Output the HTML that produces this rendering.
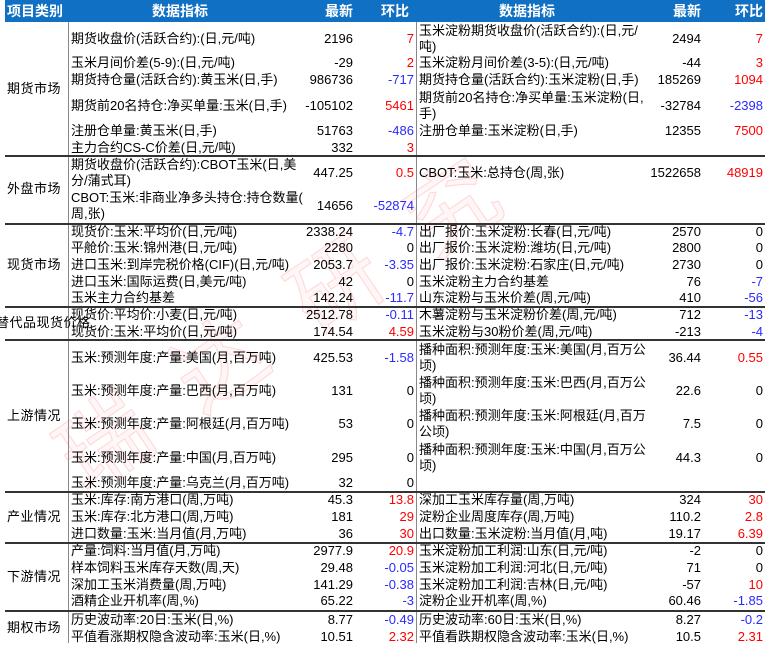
<!DOCTYPE html>
<html><head><meta charset="utf-8"><style>
*{margin:0;padding:0;box-sizing:border-box}
body{width:776px;height:643px;overflow:hidden;background:#fff;position:relative;font-family:"Liberation Sans","Noto Sans CJK SC",sans-serif;font-size:13px;color:#000}
.hd{position:absolute;left:5px;top:0;width:760px;height:22px;background:#1070c4}
.h{position:absolute;top:3px;color:#fff;font-weight:bold;font-size:14px;line-height:16px;white-space:nowrap}
.t{position:absolute;line-height:16px;white-space:nowrap}
.c{position:absolute;width:68px;left:0;text-align:center;line-height:16px;white-space:nowrap;letter-spacing:0.5px}
.r{color:#ff0000}.b{color:#2a2aff}
.vl{position:absolute;width:1px;background:#888;top:22px;height:621px}
.sp{position:absolute;left:5px;width:760px;height:2px;background:#333}
.wm{position:absolute;left:15px;top:255px;width:560px;height:100px;line-height:100px;font-size:90px;letter-spacing:50px;color:rgba(255,0,0,0.03);-webkit-text-stroke:1.2px rgba(255,90,90,0.2);transform:rotate(-34deg);transform-origin:center;white-space:nowrap;font-family:"Noto Sans CJK SC",sans-serif}
</style></head><body>
<div class="wm">瑞达研究</div>
<div class="hd"></div>
<div class="h" style="left:7px">项目类别</div>
<div class="h" style="left:152px">数据指标</div>
<div class="h" style="right:423px">最新</div>
<div class="h" style="left:381px">环比</div>
<div class="h" style="left:499px">数据指标</div>
<div class="h" style="right:75px">最新</div>
<div class="h" style="right:13px">环比</div>
<div class="vl" style="left:68px"></div>
<div class="vl" style="left:416px"></div>
<div class="sp" style="top:155px"></div>
<div class="sp" style="top:223px"></div>
<div class="sp" style="top:306px"></div>
<div class="sp" style="top:339px"></div>
<div class="sp" style="top:491px"></div>
<div class="sp" style="top:542px"></div>
<div class="sp" style="top:610px"></div>

<div class="c" style="top:81px">期货市场</div>
<div class="c" style="top:181px">外盘市场</div>
<div class="c" style="top:257px">现货市场</div>
<div class="c" style="top:315px;left:-4px;width:80px">替代品现货价格</div>
<div class="c" style="top:408px">上游情况</div>
<div class="c" style="top:509px">产业情况</div>
<div class="c" style="top:569px">下游情况</div>
<div class="c" style="top:620px">期权市场</div>

<div class="t" style="left:71px;top:31px">期货收盘价(活跃合约):(日,元/吨)</div><div class="t" style="right:423px;top:31px">2196</div><div class="t r" style="right:362px;top:31px">7</div>
<div class="t" style="left:71px;top:55px">玉米月间价差(5-9):(日,元/吨)</div><div class="t" style="right:423px;top:55px">-29</div><div class="t r" style="right:362px;top:55px">2</div>
<div class="t" style="left:71px;top:72px">期货持仓量(活跃合约):黄玉米(日,手)</div><div class="t" style="right:423px;top:72px">986736</div><div class="t b" style="right:362px;top:72px">-717</div>
<div class="t" style="left:71px;top:98px">期货前20名持仓:净买单量:玉米(日,手)</div><div class="t" style="right:423px;top:98px">-105102</div><div class="t r" style="right:362px;top:98px">5461</div>
<div class="t" style="left:71px;top:123px">注册仓单量:黄玉米(日,手)</div><div class="t" style="right:423px;top:123px">51763</div><div class="t b" style="right:362px;top:123px">-486</div>
<div class="t" style="left:71px;top:140px">主力合约CS-C价差(日,元/吨)</div><div class="t" style="right:423px;top:140px">332</div><div class="t r" style="right:362px;top:140px">3</div>

<div class="t" style="left:71px;top:157px">期货收盘价(活跃合约):CBOT玉米(日,美<br>分/蒲式耳)</div><div class="t" style="right:423px;top:165px">447.25</div><div class="t r" style="right:362px;top:165px">0.5</div>
<div class="t" style="left:71px;top:190px">CBOT:玉米:非商业净多头持仓:持仓数量(<br>周,张)</div><div class="t" style="right:423px;top:198px">14656</div><div class="t b" style="right:362px;top:198px">-52874</div>

<div class="t" style="left:71px;top:224px">现货价:玉米:平均价(日,元/吨)</div><div class="t" style="right:423px;top:224px">2338.24</div><div class="t b" style="right:362px;top:224px">-4.7</div>
<div class="t" style="left:71px;top:240px">平舱价:玉米:锦州港(日,元/吨)</div><div class="t" style="right:423px;top:240px">2280</div><div class="t" style="right:362px;top:240px">0</div>
<div class="t" style="left:71px;top:257px">进口玉米:到岸完税价格(CIF)(日,元/吨)</div><div class="t" style="right:423px;top:257px">2053.7</div><div class="t b" style="right:362px;top:257px">-3.35</div>
<div class="t" style="left:71px;top:274px">进口玉米:国际运费(日,美元/吨)</div><div class="t" style="right:423px;top:274px">42</div><div class="t" style="right:362px;top:274px">0</div>
<div class="t" style="left:71px;top:290px">玉米主力合约基差</div><div class="t" style="right:423px;top:290px">142.24</div><div class="t b" style="right:362px;top:290px">-11.7</div>

<div class="t" style="left:71px;top:307px">现货价:平均价:小麦(日,元/吨)</div><div class="t" style="right:423px;top:307px">2512.78</div><div class="t b" style="right:362px;top:307px">-0.11</div>
<div class="t" style="left:71px;top:324px">现货价:玉米:平均价(日,元/吨)</div><div class="t" style="right:423px;top:324px">174.54</div><div class="t r" style="right:362px;top:324px">4.59</div>

<div class="t" style="left:71px;top:350px">玉米:预测年度:产量:美国(月,百万吨)</div><div class="t" style="right:423px;top:350px">425.53</div><div class="t b" style="right:362px;top:350px">-1.58</div>
<div class="t" style="left:71px;top:383px">玉米:预测年度:产量:巴西(月,百万吨)</div><div class="t" style="right:423px;top:383px">131</div><div class="t" style="right:362px;top:383px">0</div>
<div class="t" style="left:71px;top:416px">玉米:预测年度:产量:阿根廷(月,百万吨)</div><div class="t" style="right:423px;top:416px">53</div><div class="t" style="right:362px;top:416px">0</div>
<div class="t" style="left:71px;top:450px">玉米:预测年度:产量:中国(月,百万吨)</div><div class="t" style="right:423px;top:450px">295</div><div class="t" style="right:362px;top:450px">0</div>
<div class="t" style="left:71px;top:475px">玉米:预测年度:产量:乌克兰(月,百万吨)</div><div class="t" style="right:423px;top:475px">32</div><div class="t" style="right:362px;top:475px">0</div>

<div class="t" style="left:71px;top:492px">玉米:库存:南方港口(周,万吨)</div><div class="t" style="right:423px;top:492px">45.3</div><div class="t r" style="right:362px;top:492px">13.8</div>
<div class="t" style="left:71px;top:509px">玉米:库存:北方港口(周,万吨)</div><div class="t" style="right:423px;top:509px">181</div><div class="t r" style="right:362px;top:509px">29</div>
<div class="t" style="left:71px;top:526px">进口数量:玉米:当月值(月,万吨)</div><div class="t" style="right:423px;top:526px">36</div><div class="t r" style="right:362px;top:526px">30</div>

<div class="t" style="left:71px;top:543px">产量:饲料:当月值(月,万吨)</div><div class="t" style="right:423px;top:543px">2977.9</div><div class="t r" style="right:362px;top:543px">20.9</div>
<div class="t" style="left:71px;top:560px">样本饲料玉米库存天数(周,天)</div><div class="t" style="right:423px;top:560px">29.48</div><div class="t b" style="right:362px;top:560px">-0.05</div>
<div class="t" style="left:71px;top:577px">深加工玉米消费量(周,万吨)</div><div class="t" style="right:423px;top:577px">141.29</div><div class="t b" style="right:362px;top:577px">-0.38</div>
<div class="t" style="left:71px;top:593px">酒精企业开机率(周,%)</div><div class="t" style="right:423px;top:593px">65.22</div><div class="t b" style="right:362px;top:593px">-3</div>

<div class="t" style="left:71px;top:612px">历史波动率:20日:玉米(日,%)</div><div class="t" style="right:423px;top:612px">8.77</div><div class="t b" style="right:362px;top:612px">-0.49</div>
<div class="t" style="left:71px;top:629px">平值看涨期权隐含波动率:玉米(日,%)</div><div class="t" style="right:423px;top:629px">10.51</div><div class="t r" style="right:362px;top:629px">2.32</div>

<div class="t" style="left:419px;top:23px">玉米淀粉期货收盘价(活跃合约):(日,元/<br>吨)</div><div class="t" style="right:75px;top:31px">2494</div><div class="t r" style="right:13px;top:31px">7</div>
<div class="t" style="left:419px;top:55px">玉米淀粉月间价差(3-5):(日,元/吨)</div><div class="t" style="right:75px;top:55px">-44</div><div class="t r" style="right:13px;top:55px">3</div>
<div class="t" style="left:419px;top:72px">期货持仓量(活跃合约):玉米淀粉(日,手)</div><div class="t" style="right:75px;top:72px">185269</div><div class="t r" style="right:13px;top:72px">1094</div>
<div class="t" style="left:419px;top:90px">期货前20名持仓:净买单量:玉米淀粉(日,<br>手)</div><div class="t" style="right:75px;top:98px">-32784</div><div class="t b" style="right:13px;top:98px">-2398</div>
<div class="t" style="left:419px;top:123px">注册仓单量:玉米淀粉(日,手)</div><div class="t" style="right:75px;top:123px">12355</div><div class="t r" style="right:13px;top:123px">7500</div>

<div class="t" style="left:419px;top:165px">CBOT:玉米:总持仓(周,张)</div><div class="t" style="right:75px;top:165px">1522658</div><div class="t r" style="right:13px;top:165px">48919</div>

<div class="t" style="left:419px;top:224px">出厂报价:玉米淀粉:长春(日,元/吨)</div><div class="t" style="right:75px;top:224px">2570</div><div class="t" style="right:13px;top:224px">0</div>
<div class="t" style="left:419px;top:240px">出厂报价:玉米淀粉:潍坊(日,元/吨)</div><div class="t" style="right:75px;top:240px">2800</div><div class="t" style="right:13px;top:240px">0</div>
<div class="t" style="left:419px;top:257px">出厂报价:玉米淀粉:石家庄(日,元/吨)</div><div class="t" style="right:75px;top:257px">2730</div><div class="t" style="right:13px;top:257px">0</div>
<div class="t" style="left:419px;top:274px">玉米淀粉主力合约基差</div><div class="t" style="right:75px;top:274px">76</div><div class="t b" style="right:13px;top:274px">-7</div>
<div class="t" style="left:419px;top:290px">山东淀粉与玉米价差(周,元/吨)</div><div class="t" style="right:75px;top:290px">410</div><div class="t b" style="right:13px;top:290px">-56</div>

<div class="t" style="left:419px;top:307px">木薯淀粉与玉米淀粉价差(周,元/吨)</div><div class="t" style="right:75px;top:307px">712</div><div class="t b" style="right:13px;top:307px">-13</div>
<div class="t" style="left:419px;top:324px">玉米淀粉与30粉价差(周,元/吨)</div><div class="t" style="right:75px;top:324px">-213</div><div class="t b" style="right:13px;top:324px">-4</div>

<div class="t" style="left:419px;top:342px">播种面积:预测年度:玉米:美国(月,百万公<br>顷)</div><div class="t" style="right:75px;top:350px">36.44</div><div class="t r" style="right:13px;top:350px">0.55</div>
<div class="t" style="left:419px;top:375px">播种面积:预测年度:玉米:巴西(月,百万公<br>顷)</div><div class="t" style="right:75px;top:383px">22.6</div><div class="t" style="right:13px;top:383px">0</div>
<div class="t" style="left:419px;top:408px">播种面积:预测年度:玉米:阿根廷(月,百万<br>公顷)</div><div class="t" style="right:75px;top:416px">7.5</div><div class="t" style="right:13px;top:416px">0</div>
<div class="t" style="left:419px;top:442px">播种面积:预测年度:玉米:中国(月,百万公<br>顷)</div><div class="t" style="right:75px;top:450px">44.3</div><div class="t" style="right:13px;top:450px">0</div>

<div class="t" style="left:419px;top:492px">深加工玉米库存量(周,万吨)</div><div class="t" style="right:75px;top:492px">324</div><div class="t r" style="right:13px;top:492px">30</div>
<div class="t" style="left:419px;top:509px">淀粉企业周度库存(周,万吨)</div><div class="t" style="right:75px;top:509px">110.2</div><div class="t r" style="right:13px;top:509px">2.8</div>
<div class="t" style="left:419px;top:526px">出口数量:玉米淀粉:当月值(月,吨)</div><div class="t" style="right:75px;top:526px">19.17</div><div class="t r" style="right:13px;top:526px">6.39</div>

<div class="t" style="left:419px;top:543px">玉米淀粉加工利润:山东(日,元/吨)</div><div class="t" style="right:75px;top:543px">-2</div><div class="t" style="right:13px;top:543px">0</div>
<div class="t" style="left:419px;top:560px">玉米淀粉加工利润:河北(日,元/吨)</div><div class="t" style="right:75px;top:560px">71</div><div class="t" style="right:13px;top:560px">0</div>
<div class="t" style="left:419px;top:577px">玉米淀粉加工利润:吉林(日,元/吨)</div><div class="t" style="right:75px;top:577px">-57</div><div class="t r" style="right:13px;top:577px">10</div>
<div class="t" style="left:419px;top:593px">淀粉企业开机率(周,%)</div><div class="t" style="right:75px;top:593px">60.46</div><div class="t b" style="right:13px;top:593px">-1.85</div>

<div class="t" style="left:419px;top:612px">历史波动率:60日:玉米(日,%)</div><div class="t" style="right:75px;top:612px">8.27</div><div class="t b" style="right:13px;top:612px">-0.2</div>
<div class="t" style="left:419px;top:629px">平值看跌期权隐含波动率:玉米(日,%)</div><div class="t" style="right:75px;top:629px">10.5</div><div class="t r" style="right:13px;top:629px">2.31</div>
</body></html>
